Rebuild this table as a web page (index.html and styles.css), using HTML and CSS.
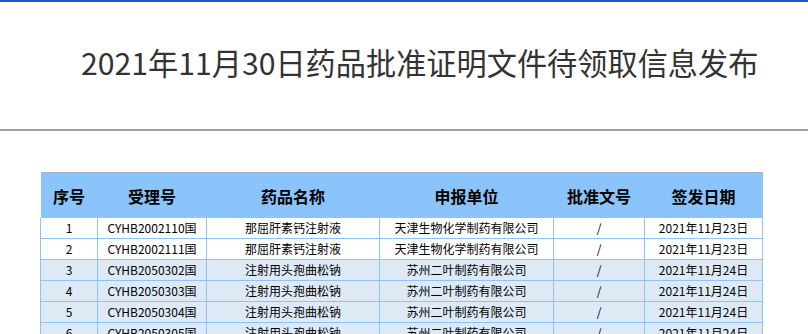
FILE: index.html
```html
<!DOCTYPE html>
<html lang="zh-CN">
<head>
<meta charset="utf-8">
<title>2021年11月30日药品批准证明文件待领取信息发布</title>
<link rel="stylesheet" href="styles.css">
</head>
<body>
<div class="top">
  <h1 class="title">2021年11月30日药品批准证明文件待领取信息发布</h1>
</div>
<div class="content">
  <table class="list">
    <colgroup>
      <col class="c1"><col class="c2"><col class="c3"><col class="c4"><col class="c5"><col class="c6">
    </colgroup>
    <thead>
      <tr><th>序号</th><th>受理号</th><th>药品名称</th><th>申报单位</th><th>批准文号</th><th>签发日期</th></tr>
    </thead>
    <tbody>
      <tr><td>1</td><td>CYHB2002110国</td><td>那屈肝素钙注射液</td><td>天津生物化学制药有限公司</td><td>/</td><td>2021年11月23日</td></tr>
      <tr><td>2</td><td>CYHB2002111国</td><td>那屈肝素钙注射液</td><td>天津生物化学制药有限公司</td><td>/</td><td>2021年11月23日</td></tr>
      <tr class="alt"><td>3</td><td>CYHB2050302国</td><td>注射用头孢曲松钠</td><td>苏州二叶制药有限公司</td><td>/</td><td>2021年11月24日</td></tr>
      <tr class="alt"><td>4</td><td>CYHB2050303国</td><td>注射用头孢曲松钠</td><td>苏州二叶制药有限公司</td><td>/</td><td>2021年11月24日</td></tr>
      <tr class="alt"><td>5</td><td>CYHB2050304国</td><td>注射用头孢曲松钠</td><td>苏州二叶制药有限公司</td><td>/</td><td>2021年11月24日</td></tr>
      <tr class="alt"><td>6</td><td>CYHB2050305国</td><td>注射用头孢曲松钠</td><td>苏州二叶制药有限公司</td><td>/</td><td>2021年11月24日</td></tr>
    </tbody>
  </table>
</div>
</body>
</html>
```

FILE: styles.css
```css
html, body {
  margin: 0;
  padding: 0;
  overflow: hidden;
  background: #fff;
}
body {
  font-family: "Noto Sans CJK SC", "Noto Sans", sans-serif;
  color: #000;
}
.top {
  border-top: 2px solid #1a5cc4;
  border-bottom: 2px solid #a0a0a0;
  height: 127px;
  box-sizing: content-box;
}
.title {
  margin: 0;
  padding: 38px 0 0 81px;
  font-size: 30.2px;
  line-height: 44px;
  font-weight: normal;
  color: #333;
  white-space: nowrap;
}
.content {
  padding: 41px 0 0 40px;
}
.list {
  border-collapse: collapse;
  table-layout: fixed;
  width: 722px;
  border-top: 1px solid #aab4c0;
}
.c1 { width: 57px; }
.c2 { width: 109px; }
.c3 { width: 173px; }
.c4 { width: 174px; }
.c5 { width: 91px; }
.c6 { width: 118px; }
.list th {
  background: #8ac4fa;
  height: 45px;
  padding: 0;
  font-size: 16px;
  font-weight: bold;
  text-align: center;
  color: #000;
  border: none;
}
.list td {
  height: 20px;
  padding: 0;
  font-size: 12px;
  line-height: 20px;
  text-align: center;
  border: 1px solid #8cc4f8;
  border-top: none;
  background: #fff;
  white-space: nowrap;
}
.list tr.alt td {
  background: #ddeaf6;
}
```
